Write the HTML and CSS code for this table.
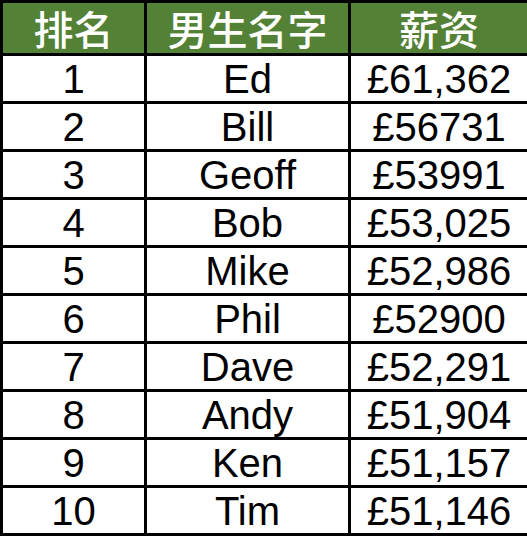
FILE: index.html
```html
<!DOCTYPE html>
<html lang="zh">
<head>
<meta charset="utf-8">
<title>薪资</title>
<link rel="stylesheet" href="styles.css">
</head>
<body>
<table class="salary">
  <colgroup>
    <col class="c-rank">
    <col class="c-name">
    <col class="c-pay">
  </colgroup>
  <thead>
    <tr><th>排名</th><th>男生名字</th><th>薪资</th></tr>
  </thead>
  <tbody>
    <tr><td>1</td><td>Ed</td><td>£61,362</td></tr>
    <tr><td>2</td><td>Bill</td><td>£56731</td></tr>
    <tr><td>3</td><td>Geoff</td><td>£53991</td></tr>
    <tr><td>4</td><td>Bob</td><td>£53,025</td></tr>
    <tr><td>5</td><td>Mike</td><td>£52,986</td></tr>
    <tr><td>6</td><td>Phil</td><td>£52900</td></tr>
    <tr><td>7</td><td>Dave</td><td>£52,291</td></tr>
    <tr><td>8</td><td>Andy</td><td>£51,904</td></tr>
    <tr><td>9</td><td>Ken</td><td>£51,157</td></tr>
    <tr><td>10</td><td>Tim</td><td>£51,146</td></tr>
  </tbody>
</table>
</body>
</html>
```
FILE: styles.css
```css
html, body {
  margin: 0;
  padding: 0;
  background: #ffffff;
}

.salary {
  border-collapse: collapse;
  table-layout: fixed;
  width: 527px;
  border: 3px solid #000;
  font-family: "Liberation Sans", Arial, "Noto Sans CJK SC", sans-serif;
  color: #000;
}

.c-rank { width: 144px; }
.c-name { width: 204px; }
.c-pay { width: 179px; }

.salary th,
.salary td {
  border: 3px solid #000;
  padding: 0;
  text-align: center;
  vertical-align: middle;
  line-height: 1;
}

.salary th {
  height: 50px;
  background: #538135;
  color: #ffffff;
  font-family: "Noto Sans CJK SC", sans-serif;
  font-weight: 500;
  font-size: 40px;
}

.salary td {
  height: 45px;
  font-size: 40px;
}
```
